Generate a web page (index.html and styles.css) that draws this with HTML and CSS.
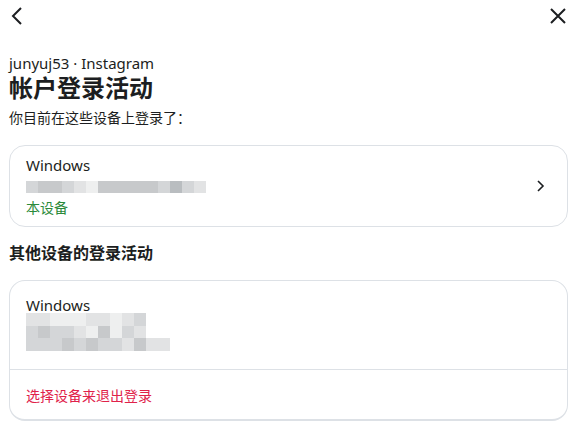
FILE: index.html
```html
<!DOCTYPE html>
<html lang="zh">
<head>
<meta charset="utf-8">
<link rel="stylesheet" href="styles.css">
</head>
<body>
<div class="page">
  <div class="topbar">
    <svg class="icon back" width="14" height="20" viewBox="0 0 14 20"><path d="M11 2 L3 10 L11 18" fill="none" stroke="#1c1e21" stroke-width="2"/></svg>
    <svg class="icon close" width="18" height="18" viewBox="0 0 18 18"><path d="M2 2 L16 16 M16 2 L2 16" fill="none" stroke="#1c1e21" stroke-width="2"/></svg>
  </div>
  <div class="account">junyuj53 · Instagram</div>
  <h1 class="title">帐户登录活动</h1>
  <div class="subtitle">你目前在这些设备上登录了：</div>

  <div class="card card-current">
    <div class="card-body">
      <div class="device">Windows</div>
      <div class="mosaic mosaic-one">
        <span class="m3"></span><span class="m2"></span><span class="m2"></span><span class="m3"></span><span class="m4"></span><span class="m5"></span><span class="m2"></span><span class="m2"></span><span class="m2"></span><span class="m2"></span><span class="m2"></span><span class="m3"></span><span class="m1"></span><span class="m3"></span><span class="m4"></span>
      </div>
      <div class="current">本设备</div>
    </div>
    <svg class="chevron" width="10" height="14" viewBox="0 0 10 14"><path d="M2 2 L7 7 L2 12" fill="none" stroke="#1c1e21" stroke-width="1.6"/></svg>
  </div>

  <h2 class="section">其他设备的登录活动</h2>

  <div class="card card-other">
    <div class="card-body other-body">
      <div class="device">Windows</div>
      <div class="mosaic mosaic-three">
        <span class="m4"></span><span class="m4"></span><span class="m5"></span><span class="m5"></span><span class="m5"></span><span class="m4"></span><span class="m4"></span><span class="m5"></span><span class="m4"></span><span class="m3"></span><span class="m0"></span><span class="m0"></span>
        <span class="m3"></span><span class="m2"></span><span class="m3"></span><span class="m3"></span><span class="m4"></span><span class="m5"></span><span class="m2"></span><span class="m5"></span><span class="m3"></span><span class="m4"></span><span class="m0"></span><span class="m0"></span>
        <span class="m3"></span><span class="m3"></span><span class="m3"></span><span class="m2"></span><span class="m3"></span><span class="m2"></span><span class="m3"></span><span class="m3"></span><span class="m4"></span><span class="m2"></span><span class="m4"></span><span class="m4"></span>
      </div>
    </div>
    <div class="card-footer">选择设备来退出登录</div>
  </div>
</div>
</body>
</html>
```

FILE: styles.css
```css
* { box-sizing: border-box; }
html, body { margin: 0; padding: 0; background: #fff; }
body {
  font-family: "Noto Sans", "Noto Sans CJK SC", sans-serif;
  color: #1c1e21;
}
.page { padding: 0 8px 0 9px; }
.topbar {
  display: flex;
  justify-content: space-between;
  align-items: center;
  padding: 6px 1px 0 1px;
  height: 26px;
}
.icon { display: block; }
.account {
  margin-top: 28px;
  font-size: 15px;
  line-height: 18px;
}
.title {
  margin: 0;
  font-size: 24px;
  font-weight: 700;
  line-height: 32px;
}
.subtitle {
  margin-top: 4px;
  font-size: 14px;
  line-height: 20px;
}
.card {
  border: 1px solid #dde1e6;
  border-radius: 16px;
  background: #fff;
}
.card-current {
  margin-top: 17px;
  height: 82px;
  display: flex;
  align-items: center;
  justify-content: space-between;
  padding: 0 21px 0 16px;
}
.device {
  font-size: 15px;
  line-height: 22px;
}
.mosaic {
  display: grid;
  grid-auto-rows: 12px;
}
.mosaic span { display: block; }
.mosaic-one {
  grid-template-columns: repeat(15, 12px);
  margin-top: 5px;
}
.mosaic-three {
  grid-template-columns: repeat(12, 12px);
  grid-auto-rows: 12.5px;
  margin-top: -3px;
}
.m0 { background: #ffffff; }
.m1 { background: #b9bdc0; }
.m2 { background: #c7c9cb; }
.m3 { background: #d4d6d8; }
.m4 { background: #e2e3e4; }
.m5 { background: #eeefef; }
.current {
  font-size: 14px;
  line-height: 20px;
  color: #2b8a3a;
  margin-top: 5px;
}
.section {
  margin: 16px 0 0 0;
  font-size: 16px;
  font-weight: 700;
  line-height: 20px;
}
.card-other {
  margin-top: 17px;
  border-bottom-width: 2px;
}
.other-body {
  padding: 13px 16px 0 16px;
  height: 88px;
}
.card-footer {
  border-top: 1px solid #dde1e6;
  height: 50px;
  display: flex;
  align-items: center;
  padding: 0 16px;
  font-size: 14px;
  color: #e0224a;
}
```
